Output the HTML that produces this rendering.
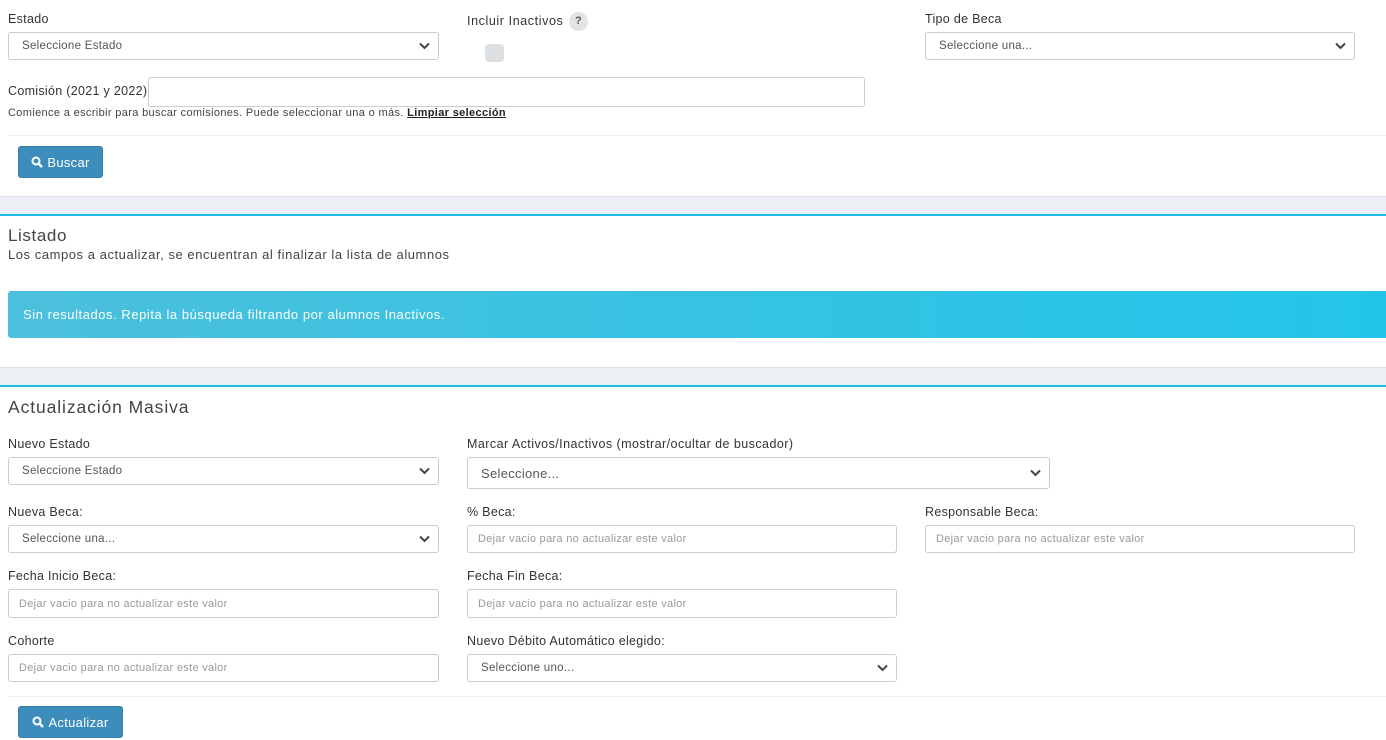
<!DOCTYPE html>
<html><head><meta charset="utf-8"><style>
*{box-sizing:border-box;margin:0;padding:0}
body{width:1386px;height:740px;background:#fff;font-family:"Liberation Sans",sans-serif;color:#333;position:relative;overflow:hidden;letter-spacing:0.3px}
.a{position:absolute;white-space:nowrap}
.lbl{font-size:12.5px;color:#333}
.sel,.inp{position:absolute;border:1px solid #ccc;border-radius:3px;background:#fff;font-size:11.5px;color:#555;padding-left:13px;display:flex;align-items:center}
.inp{color:#999;padding-left:10px;font-size:11px}
.sel svg{position:absolute;right:8px;top:50%;margin-top:-4px}
.btn{position:absolute;background:#3c8dbc;border:1px solid #367fa9;border-radius:3px;color:#fff;font-size:13px;display:flex;align-items:center;justify-content:center;gap:4px}
.band{position:absolute;left:0;width:1386px;background:#ecf0f5}
.line{position:absolute;left:0;width:1386px;height:2px;background:#1ec0e6}
.hr{position:absolute;left:8px;right:0;height:1px;background:#eee}
</style></head><body>
<div class="a lbl" style="left:8px;top:12px">Estado</div>
<div class="sel" style="left:8px;top:32px;width:431px;height:28px">Seleccione Estado<svg width="11" height="8" viewBox="0 0 11 8"><path d="M1 1.5l4.5 4.5 4.5-4.5" stroke="#444" stroke-width="2" fill="none"/></svg></div>
<div class="a lbl" style="left:467px;top:14px;letter-spacing:0.6px">Incluir Inactivos</div>
<div class="a" style="left:569px;top:12px;width:19px;height:19px;border-radius:50%;background:#e4e4e4;font-size:11px;font-weight:bold;text-align:center;line-height:19px;color:#555">?</div>
<div class="a" style="left:485px;top:44px;width:19px;height:18px;border-radius:4px;background:#dde0e3"></div>
<div class="a lbl" style="left:925px;top:12px">Tipo de Beca</div>
<div class="sel" style="left:925px;top:32px;width:430px;height:28px">Seleccione una...<svg width="11" height="8" viewBox="0 0 11 8"><path d="M1 1.5l4.5 4.5 4.5-4.5" stroke="#444" stroke-width="2" fill="none"/></svg></div>
<div class="a lbl" style="left:8px;top:84px">Comisión (2021 y 2022)</div>
<div class="inp" style="left:148px;top:77px;width:717px;height:30px"></div>
<div class="a" style="left:8px;top:107px;font-size:11px;color:#444;letter-spacing:0.35px">Comience a escribir para buscar comisiones. Puede seleccionar una o más. <u style="color:#222;font-weight:bold">Limpiar selección</u></div>
<div class="hr" style="top:135px"></div>
<div class="btn" style="left:18px;top:146px;width:85px;height:32px"><svg width="12" height="12" viewBox="0 0 12 12"><circle cx="5" cy="5" r="3.5" stroke="#fff" stroke-width="2" fill="none"/><path d="M7.5 7.5L11 11" stroke="#fff" stroke-width="2.4"/></svg>Buscar</div>
<div class="band" style="top:196px;height:18px;border-top:1px solid #dde1e6"></div>
<div class="line" style="top:214px"></div>
<div class="a" style="left:8px;top:226px;font-size:17px;color:#444;letter-spacing:0.6px">Listado</div>
<div class="a" style="left:8px;top:247px;font-size:13px;color:#444;letter-spacing:0.55px">Los campos a actualizar, se encuentran al finalizar la lista de alumnos</div>
<div class="a" style="left:8px;top:291px;width:1378px;height:47px;border-radius:3px 0 0 3px;background:linear-gradient(90deg,#4bc0dc,#22c5e9);color:#fff;font-size:13px;padding-left:15px;line-height:47px;letter-spacing:0.55px">Sin resultados. Repita la búsqueda filtrando por alumnos Inactivos.</div>
<div class="band" style="top:367px;height:19px;border-top:1px solid #dde1e6"></div>
<div class="line" style="top:385px"></div>
<div class="a" style="left:8px;top:397px;font-size:17.5px;color:#444;letter-spacing:0.9px">Actualización Masiva</div>
<div class="a lbl" style="left:8px;top:437px">Nuevo Estado</div>
<div class="sel" style="left:8px;top:457px;width:431px;height:28px">Seleccione Estado<svg width="11" height="8" viewBox="0 0 11 8"><path d="M1 1.5l4.5 4.5 4.5-4.5" stroke="#444" stroke-width="2" fill="none"/></svg></div>
<div class="a lbl" style="left:467px;top:437px;letter-spacing:0.45px">Marcar Activos/Inactivos (mostrar/ocultar de buscador)</div>
<div class="sel" style="left:467px;top:457px;width:583px;height:32px;font-size:13px">Seleccione...<svg width="11" height="8" viewBox="0 0 11 8"><path d="M1 1.5l4.5 4.5 4.5-4.5" stroke="#444" stroke-width="2" fill="none"/></svg></div>
<div class="a lbl" style="left:8px;top:505px">Nueva Beca:</div>
<div class="sel" style="left:8px;top:525px;width:431px;height:28px">Seleccione una...<svg width="11" height="8" viewBox="0 0 11 8"><path d="M1 1.5l4.5 4.5 4.5-4.5" stroke="#444" stroke-width="2" fill="none"/></svg></div>
<div class="a lbl" style="left:467px;top:505px">% Beca:</div>
<div class="inp" style="left:467px;top:525px;width:430px;height:28px">Dejar vacio para no actualizar este valor</div>
<div class="a lbl" style="left:925px;top:505px">Responsable Beca:</div>
<div class="inp" style="left:925px;top:525px;width:430px;height:28px">Dejar vacio para no actualizar este valor</div>
<div class="a lbl" style="left:8px;top:569px">Fecha Inicio Beca:</div>
<div class="inp" style="left:8px;top:589px;width:431px;height:29px">Dejar vacio para no actualizar este valor</div>
<div class="a lbl" style="left:467px;top:569px">Fecha Fin Beca:</div>
<div class="inp" style="left:467px;top:589px;width:430px;height:29px">Dejar vacio para no actualizar este valor</div>
<div class="a lbl" style="left:8px;top:634px">Cohorte</div>
<div class="inp" style="left:8px;top:654px;width:431px;height:28px">Dejar vacio para no actualizar este valor</div>
<div class="a lbl" style="left:467px;top:634px">Nuevo Débito Automático elegido:</div>
<div class="sel" style="left:467px;top:654px;width:430px;height:28px">Seleccione uno...<svg width="11" height="8" viewBox="0 0 11 8"><path d="M1 1.5l4.5 4.5 4.5-4.5" stroke="#444" stroke-width="2" fill="none"/></svg></div>
<div class="hr" style="top:696px"></div>
<div class="btn" style="left:18px;top:706px;width:105px;height:32px"><svg width="12" height="12" viewBox="0 0 12 12"><circle cx="5" cy="5" r="3.5" stroke="#fff" stroke-width="2" fill="none"/><path d="M7.5 7.5L11 11" stroke="#fff" stroke-width="2.4"/></svg>Actualizar</div>
</body></html>
